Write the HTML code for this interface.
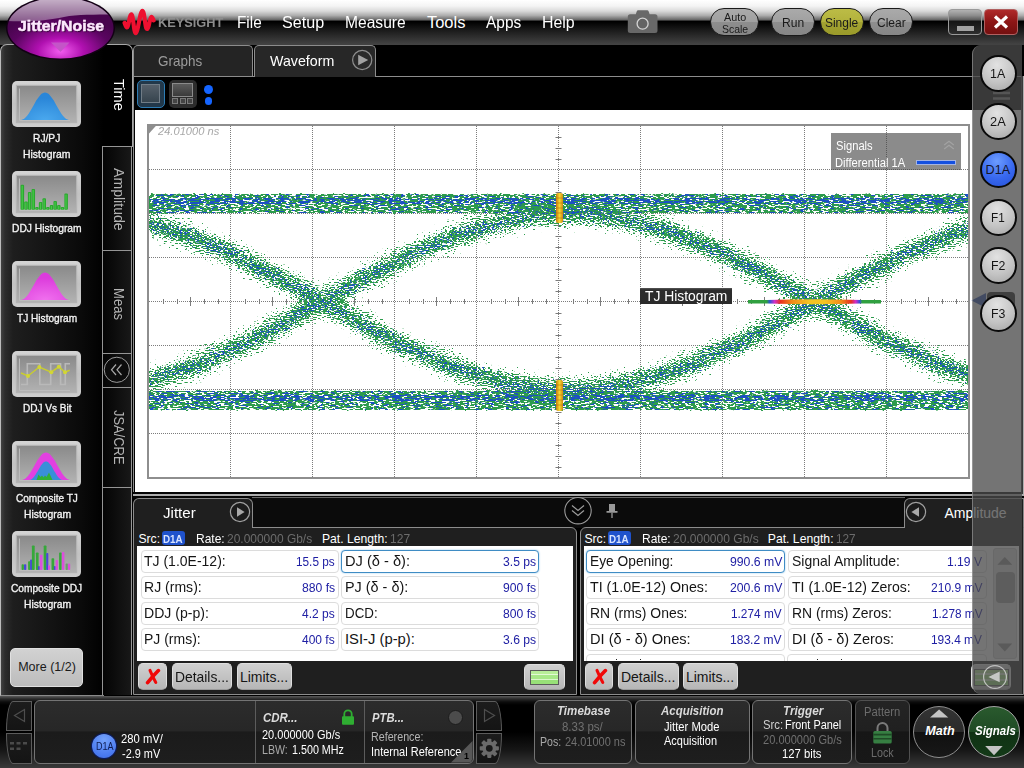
<!DOCTYPE html>
<html lang="en">
<head>
<meta charset="utf-8">
<title>Jitter/Noise</title>
<style>
*{box-sizing:border-box;margin:0;padding:0}
html,body{width:1024px;height:768px;overflow:hidden;background:#000;font-family:"Liberation Sans",sans-serif;color:#fff}
.abs{position:absolute}
.t{position:absolute;white-space:pre;transform-origin:0 0;line-height:normal}
#app{position:relative;width:1024px;height:768px;overflow:hidden;background:#000}
/* top bar */
#topbar{left:0;top:0;width:1024px;height:45px;background:linear-gradient(#fff 0,#f4f4f4 6px,#dadada 11px,#adadad 15.5px,#6c6c6c 19.5px,#000 21.5px,#1a1a1a 30px,#424242 44px)}
.menu{top:12px;font-size:17px;color:#fff;letter-spacing:-0.3px}
.pill{border-radius:14px;border:1.6px solid #1a1a1a;background:linear-gradient(#aaa,#a0a0a0 50%,#8e8e8e 50%,#868686)}
.pill.yel{background:linear-gradient(#bcbc46,#b2b23c 50%,#a3a332 50%,#9a9a2a)}
/* left panel */
#left{left:0;top:44px;width:104px;height:652px;background:linear-gradient(90deg,#424242 0,#2c2c2c 4px,#1e1e1e 12px,#161616 40px,#0a0a0a 80px,#000 100%);border:1px solid #a8a8a8;border-left:1.3px solid #bcbcbc;border-right:none;border-bottom-color:#8a8a8a;border-radius:7px 0 0 0}
.ibtn{left:12px;width:69px;height:46px;border-radius:5px;background:linear-gradient(#d4d4d4,#c2c2c2 50%,#cecece)}
.ibin{left:5px;top:5px;width:59px;height:36px;background:linear-gradient(#8a8a8a,#b2b2b2);box-shadow:0 0 1px 1px #b4b4b4}
.morebtn{border-radius:5px;border:1px solid #e0e0e0;background:linear-gradient(#d2d2d2,#bcbcbc)}
/* vertical tabs */
.vt{position:absolute;writing-mode:vertical-rl;white-space:pre;line-height:1;transform-origin:0 0}
.dot{top:5.5px;width:1.2px;height:1.2px;background:#222}
.sq{top:18px;width:6px;height:6px;border:1px solid #7a7a7a;background:#444}
/* main tabs */
.tab{top:45px;height:30.5px;border:1px solid #8c8c8c;border-bottom:none;border-radius:5px 5px 0 0;background:#242424}
.tab.act{background:#272727;height:32.5px}
/* bottom panels */
.ptab,.pbody{background:#1f1f1f;border:1px solid #8c8c8c}
.ptab{border-bottom:none}
.row{height:23.5px;background:#fff;border:1px solid #dcdcdc;border-radius:4px}
.row.sel{border:1.5px solid #3f8cc4;box-shadow:0 0 2px #8ec4ea}
.btn{height:26.7px;border-radius:5px;border:1px solid #dedede;border-bottom-color:#9a9a9a;background:linear-gradient(#d0d0d0,#b6b6b6)}
.grn{left:5px;top:5px;width:29px;height:15px;border:1px solid #5a5a5a;background:linear-gradient(#b8ee98 0,#b8ee98 22%,#e4fad6 22%,#e4fad6 34%,#a8e888 34%,#a8e888 60%,#dcf8cc 60%,#dcf8cc 72%,#98e078 72%)}
.d1a{width:22.5px;height:14px;border-radius:3px;background:#1f52cc}
/* status bar */
.sb{border:1px solid #747474;border-radius:6px;background:linear-gradient(#2c2c2c 0,#272727 48%,#1b1b1b 50%,#1e1e1e)}
.sbtn{border:1px solid #5c5c5c;background:linear-gradient(#1c1c1c,#141414)}
/* right */
.rb{left:979.5px;width:37px;height:37px;border-radius:50%;border:2px solid #0a0a0a;background:radial-gradient(circle at 45% 25%,#e2e2e2,#c4c4c4 55%,#a4a4a4)}
.rb.blu{background:radial-gradient(circle at 45% 25%,#6c9cff,#3868ee 55%,#2450d8)}
</style>
</head>
<body>
<div id="app">
<div id="topbar" class="abs"></div>
<svg class="abs" style="left:122px;top:8px" width="36" height="28" viewBox="0 0 36 28">
<path d="M2.6 14.9 C3.5 17 4 19.4 4.9 19.4 C6.7 19.4 7.5 6.3 9.4 6.3 C11.3 6.3 11.7 25.2 13.7 25.2 C16 25.2 18 2.8 20.4 2.8 C22.6 2.8 23 21 25 21 C27 21 27.8 8.9 29.3 8.9 C30.3 8.9 30.8 10.5 31.6 12.4" fill="none" stroke="#ee1030" stroke-width="4.2" stroke-linecap="round" stroke-linejoin="round"/></svg>
<span class="t" style="left:158.4px;top:14.8px;font-size:13.5px;color:#8c8c8c;font-weight:bold;transform:scaleX(0.945);">KEYSIGHT</span><span class="t" style="left:236.9px;top:12.6px;font-size:16.5px;color:#fff;transform:scaleX(0.929);">File</span><span class="t" style="left:282.4px;top:12.6px;font-size:16.5px;color:#fff;transform:scaleX(0.979);">Setup</span><span class="t" style="left:344.9px;top:12.6px;font-size:16.5px;color:#fff;transform:scaleX(0.945);">Measure</span><span class="t" style="left:426.9px;top:12.6px;font-size:16.5px;color:#fff;">Tools</span><span class="t" style="left:486.4px;top:12.6px;font-size:16.5px;color:#fff;transform:scaleX(0.936);">Apps</span><span class="t" style="left:542.4px;top:12.6px;font-size:16.5px;color:#fff;transform:scaleX(0.964);">Help</span>
<svg class="abs" style="left:626px;top:9px" width="34" height="26" viewBox="0 0 34 26">
<path d="M4.3 5.2 h5.5 l1 -3 a1.5 1.5 0 0 1 1.4 -1 h9 a1.5 1.5 0 0 1 1.4 1 l1 3 h5.4 a2.5 2.5 0 0 1 2.5 2.5 v13.8 a2.5 2.5 0 0 1 -2.5 2.5 h-24.7 a2.5 2.5 0 0 1 -2.5 -2.5 v-13.8 a2.5 2.5 0 0 1 2.5 -2.5z" fill="#686868"/>
<circle cx="16.6" cy="14.7" r="5.5" fill="#646464" stroke="#d4d4d4" stroke-width="1.3"/></svg>
<div class="abs pill " style="left:709.5px;top:8px;width:49.5px;height:28px"></div><span class="t" style="left:724.4px;top:10.6px;font-size:11.5px;color:#1a1a1a;transform:scaleX(0.938);">Auto</span><span class="t" style="left:722.4px;top:22.6px;font-size:11.5px;color:#1a1a1a;transform:scaleX(0.910);">Scale</span><div class="abs pill " style="left:771px;top:8px;width:44px;height:28px"></div><span class="t" style="left:782.4px;top:15.2px;font-size:13px;color:#1a1a1a;transform:scaleX(0.930);">Run</span><div class="abs pill yel" style="left:820px;top:8px;width:44px;height:28px"></div><span class="t" style="left:825.4px;top:15.2px;font-size:13px;color:#1a1a1a;transform:scaleX(0.919);">Single</span><div class="abs pill " style="left:869px;top:8px;width:44px;height:28px"></div><span class="t" style="left:876.9px;top:15.2px;font-size:13px;color:#1a1a1a;transform:scaleX(0.923);">Clear</span>
<div class="abs" style="left:948px;top:9px;width:34px;height:26px;border:1px solid #9a9a9a;border-radius:4px;background:rgba(70,70,70,.3)"><div class="abs" style="left:8px;top:16px;width:17px;height:4.5px;background:#a2a2a2"></div></div>
<div class="abs" style="left:984px;top:9px;width:34px;height:26px;border:1px solid #b06060;border-radius:4px;background:linear-gradient(#b02a2a,#8c1616 50%,#741010)"></div><svg class="abs" style="left:993px;top:15px" width="16" height="14" viewBox="0 0 16 14"><path d="M2 1.5 L14 12.5 M14 1.5 L2 12.5" stroke="#fff" stroke-width="3.2" fill="none"/></svg>

<div id="left" class="abs"></div>
<div class="abs ibtn" style="top:81px"><div class="abs ibin"></div><svg class="abs" style="left:0;top:0" width="69" height="46" viewBox="0 0 69 46"><path d="M7.5 7.5 V39.5 H58" fill="none" stroke="#bdbdbd" stroke-width="1"/><defs><radialGradient id="gb" cx="50%" cy="100%" r="80%"><stop offset="0" stop-color="#4aa8ee"/><stop offset="1" stop-color="#2a86d8"/></radialGradient></defs><path d="M8.0 39.0 L9.2 38.9 L10.5 38.5 L11.8 37.9 L13.0 36.9 L14.2 35.7 L15.5 34.2 L16.8 32.4 L18.0 30.5 L19.2 28.4 L20.5 26.2 L21.8 23.9 L23.0 21.7 L24.2 19.6 L25.5 17.7 L26.8 15.9 L28.0 14.4 L29.2 13.1 L30.5 12.2 L31.8 11.7 L33.0 11.5 L34.2 11.7 L35.5 12.2 L36.8 13.1 L38.0 14.4 L39.2 15.9 L40.5 17.7 L41.8 19.6 L43.0 21.7 L44.2 23.9 L45.5 26.2 L46.8 28.4 L48.0 30.5 L49.2 32.4 L50.5 34.2 L51.8 35.7 L53.0 36.9 L54.2 37.9 L55.5 38.5 L56.8 38.9 L58.0 39.0 Z" fill="url(#gb)"/></svg></div><span class="t" style="left:33.3px;top:132.3px;font-size:11.5px;color:#f4f4f4;transform:scaleX(0.890);-webkit-text-stroke:.35px #f4f4f4;">RJ/PJ</span><span class="t" style="left:23.3px;top:147.7px;font-size:11.5px;color:#f4f4f4;transform:scaleX(0.904);-webkit-text-stroke:.35px #f4f4f4;">Histogram</span>
<div class="abs ibtn" style="top:171px"><div class="abs ibin"></div><svg class="abs" style="left:0;top:0" width="69" height="46" viewBox="0 0 69 46"><path d="M7.5 7.5 V39.5 H58" fill="none" stroke="#bdbdbd" stroke-width="1"/><rect x="8.60" y="13.75" width="3.5" height="25.0" rx="1" fill="#2aa82e"/><rect x="9.60" y="14.75" width="1.2" height="24.0" fill="#48c84a"/><rect x="12.25" y="30.4" width="3.5" height="8.4" rx="1" fill="#2aa82e"/><rect x="13.25" y="31.4" width="1.2" height="7.4" fill="#48c84a"/><rect x="15.90" y="21" width="3.5" height="17.8" rx="1" fill="#2aa82e"/><rect x="16.90" y="22" width="1.2" height="16.8" fill="#48c84a"/><rect x="19.55" y="17.9" width="3.5" height="20.9" rx="1" fill="#2aa82e"/><rect x="20.55" y="18.9" width="1.2" height="19.9" fill="#48c84a"/><rect x="23.20" y="36.1" width="3.5" height="2.7" rx="1" fill="#2aa82e"/><rect x="24.20" y="37.1" width="1.2" height="1.7" fill="#48c84a"/><rect x="26.85" y="30.9" width="3.5" height="7.9" rx="1" fill="#2aa82e"/><rect x="27.85" y="31.9" width="1.2" height="6.9" fill="#48c84a"/><rect x="30.50" y="27.3" width="3.5" height="11.5" rx="1" fill="#2aa82e"/><rect x="31.50" y="28.3" width="1.2" height="10.5" fill="#48c84a"/><rect x="34.15" y="36.1" width="3.5" height="2.7" rx="1" fill="#2aa82e"/><rect x="35.15" y="37.1" width="1.2" height="1.7" fill="#48c84a"/><rect x="37.80" y="34" width="3.5" height="4.8" rx="1" fill="#2aa82e"/><rect x="38.80" y="35" width="1.2" height="3.8" fill="#48c84a"/><rect x="41.45" y="29.9" width="3.5" height="8.9" rx="1" fill="#2aa82e"/><rect x="42.45" y="30.9" width="1.2" height="7.9" fill="#48c84a"/><rect x="45.10" y="34" width="3.5" height="4.8" rx="1" fill="#2aa82e"/><rect x="46.10" y="35" width="1.2" height="3.8" fill="#48c84a"/><rect x="48.75" y="36.1" width="3.5" height="2.7" rx="1" fill="#2aa82e"/><rect x="49.75" y="37.1" width="1.2" height="1.7" fill="#48c84a"/><rect x="52.40" y="22.6" width="3.5" height="16.2" rx="1" fill="#2aa82e"/><rect x="53.40" y="23.6" width="1.2" height="15.2" fill="#48c84a"/></svg></div><span class="t" style="left:12.3px;top:222.3px;font-size:11.5px;color:#f4f4f4;transform:scaleX(0.893);-webkit-text-stroke:.35px #f4f4f4;">DDJ Histogram</span>
<div class="abs ibtn" style="top:261px"><div class="abs ibin"></div><svg class="abs" style="left:0;top:0" width="69" height="46" viewBox="0 0 69 46"><path d="M7.5 7.5 V39.5 H58" fill="none" stroke="#bdbdbd" stroke-width="1"/><defs><radialGradient id="gm" cx="50%" cy="100%" r="80%"><stop offset="0" stop-color="#f070ee"/><stop offset="1" stop-color="#dc3cdc"/></radialGradient></defs><path d="M8.0 39.0 L9.2 38.9 L10.5 38.5 L11.8 37.9 L13.0 36.9 L14.2 35.7 L15.5 34.2 L16.8 32.4 L18.0 30.5 L19.2 28.4 L20.5 26.2 L21.8 23.9 L23.0 21.7 L24.2 19.6 L25.5 17.7 L26.8 15.9 L28.0 14.4 L29.2 13.1 L30.5 12.2 L31.8 11.7 L33.0 11.5 L34.2 11.7 L35.5 12.2 L36.8 13.1 L38.0 14.4 L39.2 15.9 L40.5 17.7 L41.8 19.6 L43.0 21.7 L44.2 23.9 L45.5 26.2 L46.8 28.4 L48.0 30.5 L49.2 32.4 L50.5 34.2 L51.8 35.7 L53.0 36.9 L54.2 37.9 L55.5 38.5 L56.8 38.9 L58.0 39.0 Z" fill="url(#gm)"/></svg></div><span class="t" style="left:16.9px;top:312.3px;font-size:11.5px;color:#f4f4f4;transform:scaleX(0.879);-webkit-text-stroke:.35px #f4f4f4;">TJ Histogram</span>
<div class="abs ibtn" style="top:351px"><div class="abs ibin"></div><svg class="abs" style="left:0;top:0" width="69" height="46" viewBox="0 0 69 46"><path d="M7.5 7.5 V39.5 H58" fill="none" stroke="#bdbdbd" stroke-width="1"/><path d="M9 33.5 H15.3 V12.7 H27.8 V33.5 H38.7 V12.7 H48.6 V33.5 H53.3 V12.7 H58" fill="none" stroke="#b9b9b9" stroke-width="1.6"/><polyline points="9,22 16,25 27.3,16 39.3,21.2 46.8,15.8 53,21.2 57.7,19.3" fill="none" stroke="#c8cc30" stroke-width="1.5"/><circle cx="16" cy="25" r="2" fill="#d2d634"/><circle cx="27.3" cy="16" r="2" fill="#d2d634"/><circle cx="39.3" cy="21.2" r="2" fill="#d2d634"/><circle cx="46.8" cy="15.8" r="2" fill="#d2d634"/><circle cx="53" cy="21.2" r="2" fill="#d2d634"/></svg></div><span class="t" style="left:23.0px;top:402.3px;font-size:11.5px;color:#f4f4f4;transform:scaleX(0.874);-webkit-text-stroke:.35px #f4f4f4;">DDJ Vs Bit</span>
<div class="abs ibtn" style="top:441px"><div class="abs ibin"></div><svg class="abs" style="left:0;top:0" width="69" height="46" viewBox="0 0 69 46"><path d="M7.5 7.5 V39.5 H58" fill="none" stroke="#bdbdbd" stroke-width="1"/><path d="M9.0 39.0 L10.2 38.9 L11.5 38.5 L12.8 37.9 L14.0 36.9 L15.2 35.7 L16.5 34.2 L17.8 32.4 L19.0 30.5 L20.2 28.4 L21.5 26.2 L22.8 23.9 L24.0 21.7 L25.2 19.6 L26.5 17.7 L27.8 15.9 L29.0 14.4 L30.2 13.1 L31.5 12.2 L32.8 11.7 L34.0 11.5 L35.2 11.7 L36.5 12.2 L37.8 13.1 L39.0 14.4 L40.2 15.9 L41.5 17.7 L42.8 19.6 L44.0 21.7 L45.2 23.9 L46.5 26.2 L47.8 28.4 L49.0 30.5 L50.2 32.4 L51.5 34.2 L52.8 35.7 L54.0 36.9 L55.2 37.9 L56.5 38.5 L57.8 38.9 L59.0 39.0 Z" fill="#e240e0"/><path d="M17.0 39.0 L17.9 38.9 L18.7 38.7 L19.6 38.2 L20.4 37.6 L21.2 36.8 L22.1 35.7 L22.9 34.6 L23.8 33.3 L24.6 31.8 L25.5 30.4 L26.4 28.9 L27.2 27.4 L28.1 26.0 L28.9 24.6 L29.8 23.5 L30.6 22.4 L31.4 21.6 L32.3 21.0 L33.1 20.6 L34.0 20.5 L34.9 20.6 L35.7 21.0 L36.5 21.6 L37.4 22.4 L38.2 23.5 L39.1 24.6 L40.0 26.0 L40.8 27.4 L41.6 28.9 L42.5 30.4 L43.4 31.8 L44.2 33.3 L45.0 34.6 L45.9 35.7 L46.8 36.8 L47.6 37.6 L48.5 38.2 L49.3 38.7 L50.1 38.9 L51.0 39.0 Z" fill="#3a8fd8"/><path d="M24.5 39 L26.5 33.5 L28.5 36 L30 34.5 L31.5 36.5 L33 34.5 L34.5 36 L37 31.5 L40.5 39 Z" fill="#32b034"/></svg></div><span class="t" style="left:16.1px;top:492.3px;font-size:11.5px;color:#f4f4f4;transform:scaleX(0.874);-webkit-text-stroke:.35px #f4f4f4;">Composite TJ</span><span class="t" style="left:23.6px;top:507.7px;font-size:11.5px;color:#f4f4f4;transform:scaleX(0.901);-webkit-text-stroke:.35px #f4f4f4;">Histogram</span>
<div class="abs ibtn" style="top:531px"><div class="abs ibin"></div><svg class="abs" style="left:0;top:0" width="69" height="46" viewBox="0 0 69 46"><path d="M7.5 7.5 V39.5 H58" fill="none" stroke="#bdbdbd" stroke-width="1"/><rect x="9.6" y="33.2" width="2.3" height="5.9" rx=".8" fill="#36a83a"/><rect x="12.0" y="33.2" width="2.3" height="5.9" rx=".8" fill="#4848d8"/><rect x="16.1" y="30.2" width="2.3" height="8.8" rx=".8" fill="#36a83a"/><rect x="18.1" y="28.5" width="2.1" height="10.6" rx=".8" fill="#4848d8"/><rect x="19.9" y="14.4" width="2.8" height="24.6" rx=".8" fill="#36a83a"/><rect x="23.9" y="21.5" width="2.7" height="17.6" rx=".8" fill="#36a83a"/><rect x="26.0" y="34.9" width="1.8" height="4.1" rx=".8" fill="#4848d8"/><rect x="27.8" y="23.8" width="2.7" height="15.2" rx=".8" fill="#dc50dc"/><rect x="31.7" y="14.4" width="2.8" height="24.6" rx=".8" fill="#36a83a"/><rect x="34.2" y="22.0" width="2.1" height="17.0" rx=".8" fill="#4848d8"/><rect x="36.0" y="34.3" width="2.0" height="4.7" rx=".8" fill="#dc50dc"/><rect x="39.5" y="27.3" width="2.7" height="11.7" rx=".8" fill="#36a83a"/><rect x="41.9" y="34.9" width="1.8" height="4.1" rx=".8" fill="#4848d8"/><rect x="43.6" y="29.1" width="2.3" height="10.0" rx=".8" fill="#dc50dc"/><rect x="47.1" y="21.5" width="2.6" height="17.6" rx=".8" fill="#36a83a"/><rect x="49.8" y="21.1" width="2.6" height="17.9" rx=".8" fill="#dc50dc"/><rect x="53.6" y="32.6" width="2.3" height="6.4" rx=".8" fill="#6c9c6c"/><rect x="55.9" y="32.6" width="2.3" height="6.4" rx=".8" fill="#dc50dc"/></svg></div><span class="t" style="left:11.4px;top:582.3px;font-size:11.5px;color:#f4f4f4;transform:scaleX(0.884);-webkit-text-stroke:.35px #f4f4f4;">Composite DDJ</span><span class="t" style="left:23.6px;top:597.7px;font-size:11.5px;color:#f4f4f4;transform:scaleX(0.901);-webkit-text-stroke:.35px #f4f4f4;">Histogram</span>
<div class="abs morebtn" style="left:10px;top:647.8px;width:73px;height:39px"></div><span class="t" style="left:18.2px;top:660.2px;font-size:12.5px;color:#1a1a1a;">More (1/2)</span>

<div class="abs" style="left:103px;top:44px;width:29.5px;height:103px;border:1px solid #a8a8a8;border-left:none;border-bottom:none;border-radius:0 7px 0 0;background:#000"></div><div class="abs" style="left:102px;top:146px;width:1px;height:549px;background:#959595"></div><div class="abs" style="left:131px;top:146px;width:1px;height:549px;background:#959595"></div><div class="abs" style="left:103px;top:146px;width:28px;height:549px;background:linear-gradient(90deg,#040404,#181818)"></div><div class="abs" style="left:103px;top:146px;width:28px;height:1.2px;background:#959595"></div><div class="abs" style="left:103px;top:250px;width:28px;height:1.2px;background:#959595"></div><div class="abs" style="left:103px;top:353px;width:28px;height:1.2px;background:#959595"></div><div class="abs" style="left:103px;top:387px;width:28px;height:1.2px;background:#959595"></div><div class="abs" style="left:103px;top:487px;width:28px;height:1.2px;background:#959595"></div><span class="vt" style="left:112px;top:78.5px;font-size:15px;color:#fff;transform:scaleY(0.969)">Time</span><span class="vt" style="left:112px;top:167.5px;font-size:15px;color:#b4b4b4;transform:scaleY(0.939)">Amplitude</span><span class="vt" style="left:112px;top:287.5px;font-size:15px;color:#b4b4b4;transform:scaleY(0.871)">Meas</span><span class="vt" style="left:112px;top:410.0px;font-size:15px;color:#b4b4b4;transform:scaleY(0.861)">JSA/CRE</span><svg class="abs" style="left:103px;top:355px" width="28" height="30" viewBox="0 0 28 30"><circle cx="13.8" cy="14.8" r="12.6" fill="#0c0c0c" stroke="#9a9a9a" stroke-width="1"/><path d="M13 9.5 L8.5 14.8 L13 20 M18.5 9.5 L14 14.8 L18.5 20" fill="none" stroke="#a8a8a8" stroke-width="1.2"/></svg>
<div class="abs" style="left:132.5px;top:75.5px;width:891px;height:1.5px;background:#8c8c8c"></div><div class="abs tab" style="left:133px;width:120px"></div><span class="t" style="left:158.4px;top:52.9px;font-size:14.5px;color:#9c9c9c;transform:scaleX(0.929);">Graphs</span><div class="abs tab act" style="left:254px;width:121.5px"></div><span class="t" style="left:269.9px;top:52.9px;font-size:14.5px;color:#fff;transform:scaleX(0.980);">Waveform</span><svg class="abs" style="left:351px;top:49px" width="23" height="22" viewBox="0 0 23 22"><circle cx="11.2" cy="11" r="9.6" fill="#2a2a2a" stroke="#8e8e8e" stroke-width="1.2"/><path d="M7.2 5.8 L17.2 11 L7.2 16.2 Z" fill="#a2a2a2"/></svg><div class="abs" style="left:132.5px;top:76px;width:1.5px;height:418px;background:#8c8c8c"></div><div class="abs" style="left:134px;top:77px;width:887.2px;height:33px;background:#000"></div>
<div class="abs" style="left:137px;top:80px;width:28px;height:28px;border:1.5px solid #2c7cb4;border-radius:5px;background:#22384a"><div class="abs" style="left:3px;top:3px;width:19px;height:19px;border:1px solid #707c86;background:linear-gradient(#56606a,#36444e)"></div></div><div class="abs" style="left:169px;top:80px;width:28px;height:28px;border-radius:5px;background:#2c2c2c"><div class="abs" style="left:3px;top:3px;width:21px;height:13.5px;border:1px solid #8a8a8a;background:linear-gradient(#5c5c5c,#3a3a3a)"></div><div class="abs sq" style="left:3px"></div><div class="abs sq" style="left:10.5px"></div><div class="abs sq" style="left:18px"></div></div><div class="abs" style="left:204px;top:84.5px;width:9px;height:9px;border-radius:50%;background:#1565ff"></div><div class="abs" style="left:204.8px;top:97.3px;width:7.4px;height:7.4px;border-radius:50%;background:#1565ff"></div>
<div class="abs" style="left:134.6px;top:109.8px;width:886.6px;height:382.2px;background:#fff"></div><svg class="abs" style="left:147px;top:124px" width="823" height="355" viewBox="147 124 823 355"><defs><filter id="spg" filterUnits="userSpaceOnUse" x="147" y="124" width="823" height="355" color-interpolation-filters="sRGB"><feTurbulence type="fractalNoise" baseFrequency="0.42 0.97" numOctaves="1" seed="7" result="n"/><feColorMatrix in="n" type="matrix" values="0 0 0 0 0 0 0 0 0 0 0 0 0 0 0 2.3 0 0 0 -0.620" result="na"/><feGaussianBlur in="SourceAlpha" stdDeviation="4.2" result="d"/><feComposite in="d" in2="na" operator="arithmetic" k1="0" k2="12" k3="-12" k4="0.5" result="m"/><feComponentTransfer in="d" result="dm"><feFuncA type="linear" slope="40" intercept="-0.5"/></feComponentTransfer><feComposite in="m" in2="dm" operator="in" result="mm"/><feFlood flood-color="#2c9b4c"/><feComposite operator="in" in2="mm"/></filter><filter id="spb" filterUnits="userSpaceOnUse" x="147" y="124" width="823" height="355" color-interpolation-filters="sRGB"><feTurbulence type="fractalNoise" baseFrequency="0.4 0.95" numOctaves="1" seed="23" result="n"/><feColorMatrix in="n" type="matrix" values="0 0 0 0 0 0 0 0 0 0 0 0 0 0 0 0 2.3 0 0 -0.620" result="na"/><feGaussianBlur in="SourceAlpha" stdDeviation="3.0" result="d"/><feComposite in="d" in2="na" operator="arithmetic" k1="0" k2="12" k3="-12" k4="0.5" result="m"/><feComponentTransfer in="d" result="dm"><feFuncA type="linear" slope="40" intercept="-0.5"/></feComponentTransfer><feComposite in="m" in2="dm" operator="in" result="mm"/><feFlood flood-color="#1c54bc"/><feComposite operator="in" in2="mm"/></filter><filter id="rlg" filterUnits="userSpaceOnUse" x="147" y="124" width="823" height="355" color-interpolation-filters="sRGB"><feTurbulence type="fractalNoise" baseFrequency="0.28 1.37" numOctaves="1" seed="11" result="n"/><feColorMatrix in="n" type="matrix" values="0 0 0 0 0 0 0 0 0 0 0 0 0 0 0 2.3 0 0 0 -0.620" result="na"/><feGaussianBlur in="SourceAlpha" stdDeviation="0.6" result="d"/><feComposite in="d" in2="na" operator="arithmetic" k1="0" k2="12" k3="-12" k4="0.5" result="m"/><feComponentTransfer in="d" result="dm"><feFuncA type="linear" slope="40" intercept="-0.5"/></feComponentTransfer><feComposite in="m" in2="dm" operator="in" result="mm"/><feFlood flood-color="#2c9b4c"/><feComposite operator="in" in2="mm"/></filter><filter id="rlb" filterUnits="userSpaceOnUse" x="147" y="124" width="823" height="355" color-interpolation-filters="sRGB"><feTurbulence type="fractalNoise" baseFrequency="0.2 1.43" numOctaves="1" seed="31" result="n"/><feColorMatrix in="n" type="matrix" values="0 0 0 0 0 0 0 0 0 0 0 0 0 0 0 0 2.3 0 0 -0.620" result="na"/><feGaussianBlur in="SourceAlpha" stdDeviation="0.6" result="d"/><feComposite in="d" in2="na" operator="arithmetic" k1="0" k2="12" k3="-12" k4="0.5" result="m"/><feComponentTransfer in="d" result="dm"><feFuncA type="linear" slope="40" intercept="-0.5"/></feComponentTransfer><feComposite in="m" in2="dm" operator="in" result="mm"/><feFlood flood-color="#1c50c4"/><feComposite operator="in" in2="mm"/></filter><clipPath id="pc"><rect x="149" y="126" width="819" height="351"/></clipPath></defs><g stroke="#7c7c7c" stroke-width="1" stroke-dasharray="1 1" fill="none"><path d="M230.5 126 V477"/><path d="M312.5 126 V477"/><path d="M394.5 126 V477"/><path d="M476.5 126 V477"/><path d="M558.5 126 V477"/><path d="M640.5 126 V477"/><path d="M722.5 126 V477"/><path d="M804.5 126 V477"/><path d="M886.5 126 V477"/><path d="M149 169.5 H968"/><path d="M149 213.5 H968"/><path d="M149 257.5 H968"/><path d="M149 301.5 H968"/><path d="M149 345.5 H968"/><path d="M149 389.5 H968"/><path d="M149 433.5 H968"/></g><path d="M163.5 299.0 V304.0M177.5 299.0 V304.0M190.5 297.0 V306.0M204.5 299.0 V304.0M218.5 299.0 V304.0M245.5 299.0 V304.0M259.5 299.0 V304.0M272.5 297.0 V306.0M286.5 299.0 V304.0M300.5 299.0 V304.0M327.5 299.0 V304.0M341.5 299.0 V304.0M354.5 297.0 V306.0M368.5 299.0 V304.0M382.5 299.0 V304.0M409.5 299.0 V304.0M423.5 299.0 V304.0M436.5 297.0 V306.0M450.5 299.0 V304.0M464.5 299.0 V304.0M491.5 299.0 V304.0M505.5 299.0 V304.0M518.5 297.0 V306.0M532.5 299.0 V304.0M546.5 299.0 V304.0M573.5 299.0 V304.0M587.5 299.0 V304.0M600.5 297.0 V306.0M614.5 299.0 V304.0M628.5 299.0 V304.0M655.5 299.0 V304.0M669.5 299.0 V304.0M682.5 297.0 V306.0M696.5 299.0 V304.0M710.5 299.0 V304.0M737.5 299.0 V304.0M751.5 299.0 V304.0M764.5 297.0 V306.0M778.5 299.0 V304.0M792.5 299.0 V304.0M819.5 299.0 V304.0M833.5 299.0 V304.0M846.5 297.0 V306.0M860.5 299.0 V304.0M874.5 299.0 V304.0M901.5 299.0 V304.0M915.5 299.0 V304.0M928.5 297.0 V306.0M942.5 299.0 V304.0M956.5 299.0 V304.0M555.5 137.5 H561.5M555.5 148.5 H561.5M555.5 159.5 H561.5M555.5 181.5 H561.5M555.5 192.5 H561.5M555.5 203.5 H561.5M555.5 225.5 H561.5M555.5 236.5 H561.5M555.5 247.5 H561.5M555.5 269.5 H561.5M555.5 280.5 H561.5M555.5 291.5 H561.5M555.5 313.5 H561.5M555.5 324.5 H561.5M555.5 335.5 H561.5M555.5 357.5 H561.5M555.5 368.5 H561.5M555.5 379.5 H561.5M555.5 401.5 H561.5M555.5 412.5 H561.5M555.5 423.5 H561.5M555.5 445.5 H561.5M555.5 456.5 H561.5M555.5 467.5 H561.5" stroke="#7c7c7c" stroke-width="1" fill="none"/><g clip-path="url(#pc)"><g filter="url(#rlg)" fill="none" stroke="#000"><path d="M100 203.5 H1020 M100 400.5 H1020" stroke-width="19.5" stroke-opacity=".64"/></g><g filter="url(#spg)" fill="none" stroke="#000"><path d="M-417.5 389.5 L-407.2 389.3 L-397.0 388.8 L-386.7 387.8 L-376.4 386.5 L-366.1 384.9 L-355.9 382.8 L-345.6 380.5 L-335.3 377.8 L-325.1 374.8 L-314.8 371.4 L-304.5 367.8 L-294.2 363.9 L-284.0 359.7 L-273.7 355.3 L-263.4 350.6 L-253.2 345.8 L-242.9 340.7 L-232.6 335.5 L-222.4 330.1 L-212.1 324.6 L-201.8 319.1 L-191.5 313.4 L-181.3 307.7 L-171.0 302.0 L-160.7 296.3 L-150.5 290.6 L-140.2 284.9 L-129.9 279.4 L-119.6 273.9 L-109.4 268.5 L-99.1 263.3 L-88.8 258.2 L-78.6 253.4 L-68.3 248.7 L-58.0 244.3 L-47.8 240.1 L-37.5 236.2 L-27.2 232.6 L-16.9 229.2 L-6.7 226.2 L3.6 223.5 L13.9 221.2 L24.1 219.1 L34.4 217.5 L44.7 216.2 L55.0 215.2 L65.2 214.7 L75.5 214.5M-417.5 214.5 L-407.2 214.7 L-397.0 215.2 L-386.7 216.2 L-376.4 217.5 L-366.1 219.1 L-355.9 221.2 L-345.6 223.5 L-335.3 226.2 L-325.1 229.2 L-314.8 232.6 L-304.5 236.2 L-294.2 240.1 L-284.0 244.3 L-273.7 248.7 L-263.4 253.4 L-253.2 258.2 L-242.9 263.3 L-232.6 268.5 L-222.4 273.9 L-212.1 279.4 L-201.8 284.9 L-191.5 290.6 L-181.3 296.3 L-171.0 302.0 L-160.7 307.7 L-150.5 313.4 L-140.2 319.1 L-129.9 324.6 L-119.6 330.1 L-109.4 335.5 L-99.1 340.7 L-88.8 345.8 L-78.6 350.6 L-68.3 355.3 L-58.0 359.7 L-47.8 363.9 L-37.5 367.8 L-27.2 371.4 L-16.9 374.8 L-6.7 377.8 L3.6 380.5 L13.9 382.8 L24.1 384.9 L34.4 386.5 L44.7 387.8 L55.0 388.8 L65.2 389.3 L75.5 389.5M75.5 389.5 L85.8 389.3 L96.0 388.8 L106.3 387.8 L116.6 386.5 L126.9 384.9 L137.1 382.8 L147.4 380.5 L157.7 377.8 L167.9 374.8 L178.2 371.4 L188.5 367.8 L198.8 363.9 L209.0 359.7 L219.3 355.3 L229.6 350.6 L239.8 345.8 L250.1 340.7 L260.4 335.5 L270.6 330.1 L280.9 324.6 L291.2 319.1 L301.5 313.4 L311.7 307.7 L322.0 302.0 L332.3 296.3 L342.5 290.6 L352.8 284.9 L363.1 279.4 L373.4 273.9 L383.6 268.5 L393.9 263.3 L404.2 258.2 L414.4 253.4 L424.7 248.7 L435.0 244.3 L445.2 240.1 L455.5 236.2 L465.8 232.6 L476.1 229.2 L486.3 226.2 L496.6 223.5 L506.9 221.2 L517.1 219.1 L527.4 217.5 L537.7 216.2 L548.0 215.2 L558.2 214.7 L568.5 214.5M75.5 214.5 L85.8 214.7 L96.0 215.2 L106.3 216.2 L116.6 217.5 L126.9 219.1 L137.1 221.2 L147.4 223.5 L157.7 226.2 L167.9 229.2 L178.2 232.6 L188.5 236.2 L198.8 240.1 L209.0 244.3 L219.3 248.7 L229.6 253.4 L239.8 258.2 L250.1 263.3 L260.4 268.5 L270.6 273.9 L280.9 279.4 L291.2 284.9 L301.5 290.6 L311.7 296.3 L322.0 302.0 L332.3 307.7 L342.5 313.4 L352.8 319.1 L363.1 324.6 L373.4 330.1 L383.6 335.5 L393.9 340.7 L404.2 345.8 L414.4 350.6 L424.7 355.3 L435.0 359.7 L445.2 363.9 L455.5 367.8 L465.8 371.4 L476.1 374.8 L486.3 377.8 L496.6 380.5 L506.9 382.8 L517.1 384.9 L527.4 386.5 L537.7 387.8 L548.0 388.8 L558.2 389.3 L568.5 389.5M568.5 389.5 L578.8 389.3 L589.0 388.8 L599.3 387.8 L609.6 386.5 L619.9 384.9 L630.1 382.8 L640.4 380.5 L650.7 377.8 L660.9 374.8 L671.2 371.4 L681.5 367.8 L691.8 363.9 L702.0 359.7 L712.3 355.3 L722.6 350.6 L732.8 345.8 L743.1 340.7 L753.4 335.5 L763.6 330.1 L773.9 324.6 L784.2 319.1 L794.5 313.4 L804.7 307.7 L815.0 302.0 L825.3 296.3 L835.5 290.6 L845.8 284.9 L856.1 279.4 L866.4 273.9 L876.6 268.5 L886.9 263.3 L897.2 258.2 L907.4 253.4 L917.7 248.7 L928.0 244.3 L938.2 240.1 L948.5 236.2 L958.8 232.6 L969.1 229.2 L979.3 226.2 L989.6 223.5 L999.9 221.2 L1010.1 219.1 L1020.4 217.5 L1030.7 216.2 L1041.0 215.2 L1051.2 214.7 L1061.5 214.5M568.5 214.5 L578.8 214.7 L589.0 215.2 L599.3 216.2 L609.6 217.5 L619.9 219.1 L630.1 221.2 L640.4 223.5 L650.7 226.2 L660.9 229.2 L671.2 232.6 L681.5 236.2 L691.8 240.1 L702.0 244.3 L712.3 248.7 L722.6 253.4 L732.8 258.2 L743.1 263.3 L753.4 268.5 L763.6 273.9 L773.9 279.4 L784.2 284.9 L794.5 290.6 L804.7 296.3 L815.0 302.0 L825.3 307.7 L835.5 313.4 L845.8 319.1 L856.1 324.6 L866.4 330.1 L876.6 335.5 L886.9 340.7 L897.2 345.8 L907.4 350.6 L917.7 355.3 L928.0 359.7 L938.2 363.9 L948.5 367.8 L958.8 371.4 L969.1 374.8 L979.3 377.8 L989.6 380.5 L999.9 382.8 L1010.1 384.9 L1020.4 386.5 L1030.7 387.8 L1041.0 388.8 L1051.2 389.3 L1061.5 389.5" stroke-width="21" stroke-opacity=".66"/></g><g filter="url(#rlb)" fill="none" stroke="#000"><path d="M100 203.5 H1020 M100 400.5 H1020" stroke-width="19" stroke-opacity=".27"/><path d="M100 201.0 H1020 M100 398.0 H1020" stroke-width="6" stroke-opacity=".36"/></g><g filter="url(#spb)" fill="none" stroke="#000"><path d="M-417.5 389.5 L-407.2 389.3 L-397.0 388.8 L-386.7 387.8 L-376.4 386.5 L-366.1 384.9 L-355.9 382.8 L-345.6 380.5 L-335.3 377.8 L-325.1 374.8 L-314.8 371.4 L-304.5 367.8 L-294.2 363.9 L-284.0 359.7 L-273.7 355.3 L-263.4 350.6 L-253.2 345.8 L-242.9 340.7 L-232.6 335.5 L-222.4 330.1 L-212.1 324.6 L-201.8 319.1 L-191.5 313.4 L-181.3 307.7 L-171.0 302.0 L-160.7 296.3 L-150.5 290.6 L-140.2 284.9 L-129.9 279.4 L-119.6 273.9 L-109.4 268.5 L-99.1 263.3 L-88.8 258.2 L-78.6 253.4 L-68.3 248.7 L-58.0 244.3 L-47.8 240.1 L-37.5 236.2 L-27.2 232.6 L-16.9 229.2 L-6.7 226.2 L3.6 223.5 L13.9 221.2 L24.1 219.1 L34.4 217.5 L44.7 216.2 L55.0 215.2 L65.2 214.7 L75.5 214.5M-417.5 214.5 L-407.2 214.7 L-397.0 215.2 L-386.7 216.2 L-376.4 217.5 L-366.1 219.1 L-355.9 221.2 L-345.6 223.5 L-335.3 226.2 L-325.1 229.2 L-314.8 232.6 L-304.5 236.2 L-294.2 240.1 L-284.0 244.3 L-273.7 248.7 L-263.4 253.4 L-253.2 258.2 L-242.9 263.3 L-232.6 268.5 L-222.4 273.9 L-212.1 279.4 L-201.8 284.9 L-191.5 290.6 L-181.3 296.3 L-171.0 302.0 L-160.7 307.7 L-150.5 313.4 L-140.2 319.1 L-129.9 324.6 L-119.6 330.1 L-109.4 335.5 L-99.1 340.7 L-88.8 345.8 L-78.6 350.6 L-68.3 355.3 L-58.0 359.7 L-47.8 363.9 L-37.5 367.8 L-27.2 371.4 L-16.9 374.8 L-6.7 377.8 L3.6 380.5 L13.9 382.8 L24.1 384.9 L34.4 386.5 L44.7 387.8 L55.0 388.8 L65.2 389.3 L75.5 389.5M75.5 389.5 L85.8 389.3 L96.0 388.8 L106.3 387.8 L116.6 386.5 L126.9 384.9 L137.1 382.8 L147.4 380.5 L157.7 377.8 L167.9 374.8 L178.2 371.4 L188.5 367.8 L198.8 363.9 L209.0 359.7 L219.3 355.3 L229.6 350.6 L239.8 345.8 L250.1 340.7 L260.4 335.5 L270.6 330.1 L280.9 324.6 L291.2 319.1 L301.5 313.4 L311.7 307.7 L322.0 302.0 L332.3 296.3 L342.5 290.6 L352.8 284.9 L363.1 279.4 L373.4 273.9 L383.6 268.5 L393.9 263.3 L404.2 258.2 L414.4 253.4 L424.7 248.7 L435.0 244.3 L445.2 240.1 L455.5 236.2 L465.8 232.6 L476.1 229.2 L486.3 226.2 L496.6 223.5 L506.9 221.2 L517.1 219.1 L527.4 217.5 L537.7 216.2 L548.0 215.2 L558.2 214.7 L568.5 214.5M75.5 214.5 L85.8 214.7 L96.0 215.2 L106.3 216.2 L116.6 217.5 L126.9 219.1 L137.1 221.2 L147.4 223.5 L157.7 226.2 L167.9 229.2 L178.2 232.6 L188.5 236.2 L198.8 240.1 L209.0 244.3 L219.3 248.7 L229.6 253.4 L239.8 258.2 L250.1 263.3 L260.4 268.5 L270.6 273.9 L280.9 279.4 L291.2 284.9 L301.5 290.6 L311.7 296.3 L322.0 302.0 L332.3 307.7 L342.5 313.4 L352.8 319.1 L363.1 324.6 L373.4 330.1 L383.6 335.5 L393.9 340.7 L404.2 345.8 L414.4 350.6 L424.7 355.3 L435.0 359.7 L445.2 363.9 L455.5 367.8 L465.8 371.4 L476.1 374.8 L486.3 377.8 L496.6 380.5 L506.9 382.8 L517.1 384.9 L527.4 386.5 L537.7 387.8 L548.0 388.8 L558.2 389.3 L568.5 389.5M568.5 389.5 L578.8 389.3 L589.0 388.8 L599.3 387.8 L609.6 386.5 L619.9 384.9 L630.1 382.8 L640.4 380.5 L650.7 377.8 L660.9 374.8 L671.2 371.4 L681.5 367.8 L691.8 363.9 L702.0 359.7 L712.3 355.3 L722.6 350.6 L732.8 345.8 L743.1 340.7 L753.4 335.5 L763.6 330.1 L773.9 324.6 L784.2 319.1 L794.5 313.4 L804.7 307.7 L815.0 302.0 L825.3 296.3 L835.5 290.6 L845.8 284.9 L856.1 279.4 L866.4 273.9 L876.6 268.5 L886.9 263.3 L897.2 258.2 L907.4 253.4 L917.7 248.7 L928.0 244.3 L938.2 240.1 L948.5 236.2 L958.8 232.6 L969.1 229.2 L979.3 226.2 L989.6 223.5 L999.9 221.2 L1010.1 219.1 L1020.4 217.5 L1030.7 216.2 L1041.0 215.2 L1051.2 214.7 L1061.5 214.5M568.5 214.5 L578.8 214.7 L589.0 215.2 L599.3 216.2 L609.6 217.5 L619.9 219.1 L630.1 221.2 L640.4 223.5 L650.7 226.2 L660.9 229.2 L671.2 232.6 L681.5 236.2 L691.8 240.1 L702.0 244.3 L712.3 248.7 L722.6 253.4 L732.8 258.2 L743.1 263.3 L753.4 268.5 L763.6 273.9 L773.9 279.4 L784.2 284.9 L794.5 290.6 L804.7 296.3 L815.0 302.0 L825.3 307.7 L835.5 313.4 L845.8 319.1 L856.1 324.6 L866.4 330.1 L876.6 335.5 L886.9 340.7 L897.2 345.8 L907.4 350.6 L917.7 355.3 L928.0 359.7 L938.2 363.9 L948.5 367.8 L958.8 371.4 L969.1 374.8 L979.3 377.8 L989.6 380.5 L999.9 382.8 L1010.1 384.9 L1020.4 386.5 L1030.7 387.8 L1041.0 388.8 L1051.2 389.3 L1061.5 389.5" stroke-width="11" stroke-opacity=".41"/></g></g><defs><linearGradient id="hy" x1="0" x2="1"><stop offset="0" stop-color="#c87a10"/><stop offset=".5" stop-color="#f6d830"/><stop offset="1" stop-color="#d08a14"/></linearGradient>
<linearGradient id="tj" x1="0" x2="1"><stop offset="0" stop-color="#30a040"/><stop offset=".14" stop-color="#30a040"/><stop offset=".165" stop-color="#3050d8"/><stop offset=".2" stop-color="#d030c8"/><stop offset=".245" stop-color="#e83020"/><stop offset=".33" stop-color="#f08a18"/><stop offset=".46" stop-color="#f4c424"/><stop offset=".58" stop-color="#f4c424"/><stop offset=".7" stop-color="#f08a18"/><stop offset=".775" stop-color="#e83020"/><stop offset=".81" stop-color="#d030c8"/><stop offset=".84" stop-color="#3050d8"/><stop offset=".858" stop-color="#30a040"/><stop offset="1" stop-color="#30a040"/></linearGradient></defs><rect x="556" y="193" width="7" height="30" rx="2" fill="url(#hy)"/><rect x="556" y="380" width="7" height="31" rx="2" fill="url(#hy)"/><path d="M556 198h7M556 203h7M556 208h7M556 213h7M556 218h7M556 385h7M556 390h7M556 395h7M556 400h7M556 405h7" stroke="#b86a10" stroke-width=".8" opacity=".7"/><path d="M748 300 H767 Q814 298.7 861 300 H881 V303.6 H861 Q814 305 767 303.6 H748 Z" fill="url(#tj)"/><rect x="148" y="125" width="821" height="353" fill="none" stroke="#8e8e8e" stroke-width="2"/><path d="M147 124 H157.6 L147 135.8 Z" fill="#8e8e8e"/></svg><span class="t" style="left:157.9px;top:125.2px;font-size:10.5px;color:#a8a8a8;font-style:italic;transform:scaleX(1.059);">24.01000 ns</span><div class="abs" style="left:831px;top:133px;width:130px;height:36.5px;background:rgba(68,68,68,.62)"></div><span class="t" style="left:835.9px;top:138.6px;font-size:12px;color:#fff;transform:scaleX(0.932);">Signals</span><span class="t" style="left:834.9px;top:155.6px;font-size:12px;color:#fff;transform:scaleX(0.934);">Differential 1A</span><div class="abs" style="left:916px;top:160px;width:40px;height:4.5px;background:#1450e0;border:.6px solid #a4b4e4"></div><svg class="abs" style="left:943px;top:140px" width="12" height="10" viewBox="0 0 12 10"><path d="M1.2 5 L6 1.2 L10.8 5 M1.2 9 L6 5.2 L10.8 9" fill="none" stroke="#a2a2a2" stroke-width="1.2"/></svg><div class="abs" style="left:640px;top:287.5px;width:92px;height:16px;background:linear-gradient(#585858 0,#2c2c2c 2px,#2a2a2a)"></div><span class="t" style="left:645.4px;top:288.4px;font-size:14px;color:#fff;transform:scaleX(0.990);">TJ Histogram</span>

<div class="abs" style="left:132.5px;top:492px;width:891px;height:5.5px;background:#050505"></div><div class="abs" style="left:132.5px;top:494.2px;width:891px;height:1.4px;background:#adadad"></div><div class="abs" style="left:252px;top:497px;width:653px;height:30.5px;background:#0b0b0b;border-top:1px solid #6a6a6a"></div><div class="abs ptab" style="left:132.5px;top:497.5px;width:120px;height:31px;border-radius:6px 6px 0 0"></div><div class="abs pbody" style="left:132.5px;top:527px;width:444.5px;height:167.5px;border-radius:0 6px 0 0"></div><div class="abs" style="left:133.5px;top:526px;width:118px;height:3px;background:#1f1f1f"></div><span class="t" style="left:163.4px;top:504.9px;font-size:14px;color:#fff;transform:scaleX(1.078);">Jitter</span><svg class="abs" style="left:229px;top:501px" width="22" height="22" viewBox="0 0 22 22"><circle cx="11" cy="11" r="9.6" fill="#1c1c1c" stroke="#a0a0a0" stroke-width="1.2"/><path d="M8 6.2 L15.6 11 L8 15.8 Z" fill="#a8a8a8"/></svg><span class="t" style="left:138.4px;top:532.0px;font-size:12.2px;color:#fff;">Src:</span><div class="abs d1a" style="left:162px;top:531px"></div><span class="t" style="left:163.4px;top:532.7px;font-size:10.5px;color:#d8e4ff;font-weight:bold;transform:scaleX(0.937);">D1A</span><span class="t" style="left:196.4px;top:532.0px;font-size:12.2px;color:#fff;transform:scaleX(0.985);">Rate:</span><span class="t" style="left:227.4px;top:532.0px;font-size:12.2px;color:#6c6c6c;transform:scaleX(0.982);">20.000000 Gb/s</span><span class="t" style="left:321.9px;top:532.0px;font-size:12.2px;color:#fff;">Pat. Length:</span><span class="t" style="left:389.9px;top:532.0px;font-size:12.2px;color:#6c6c6c;transform:scaleX(0.988);">127</span><div class="abs" style="left:137px;top:546px;width:435.5px;height:115px;background:#fff"></div>
<div class="abs row" style="left:140.5px;top:549.5px;width:198px"></div><span class="t" style="left:144.4px;top:552.9px;font-size:14.8px;color:#151515;transform:scaleX(0.946);">TJ (1.0E-12):</span><span class="t" style="left:296.4px;top:554.0px;font-size:13.6px;color:#2020a4;transform:scaleX(0.868);">15.5 ps</span><div class="abs row" style="left:140.5px;top:575.5px;width:198px"></div><span class="t" style="left:144.4px;top:578.9px;font-size:14.8px;color:#151515;transform:scaleX(0.949);">RJ (rms):</span><span class="t" style="left:301.9px;top:580.0px;font-size:13.6px;color:#2020a4;transform:scaleX(0.897);">880 fs</span><div class="abs row" style="left:140.5px;top:601.5px;width:198px"></div><span class="t" style="left:144.4px;top:604.9px;font-size:14.8px;color:#151515;transform:scaleX(0.951);">DDJ (p-p):</span><span class="t" style="left:302.4px;top:606.0px;font-size:13.6px;color:#2020a4;transform:scaleX(0.883);">4.2 ps</span><div class="abs row" style="left:140.5px;top:627.5px;width:198px"></div><span class="t" style="left:144.4px;top:630.9px;font-size:14.8px;color:#151515;transform:scaleX(0.945);">PJ (rms):</span><span class="t" style="left:302.4px;top:632.0px;font-size:13.6px;color:#2020a4;transform:scaleX(0.883);">400 fs</span>
<div class="abs row sel" style="left:341.1px;top:549.5px;width:198px"></div><span class="t" style="left:345.0px;top:552.9px;font-size:14.8px;color:#151515;transform:scaleX(0.988);">DJ (δ - δ):</span><span class="t" style="left:503.2px;top:554.0px;font-size:13.6px;color:#2020a4;transform:scaleX(0.894);">3.5 ps</span><div class="abs row" style="left:341.1px;top:575.5px;width:198px"></div><span class="t" style="left:345.0px;top:578.9px;font-size:14.8px;color:#151515;transform:scaleX(0.973);">PJ (δ - δ):</span><span class="t" style="left:503.2px;top:580.0px;font-size:13.6px;color:#2020a4;transform:scaleX(0.894);">900 fs</span><div class="abs row" style="left:341.1px;top:601.5px;width:198px"></div><span class="t" style="left:345.0px;top:604.9px;font-size:14.8px;color:#151515;transform:scaleX(0.901);">DCD:</span><span class="t" style="left:503.2px;top:606.0px;font-size:13.6px;color:#2020a4;transform:scaleX(0.894);">800 fs</span><div class="abs row" style="left:341.1px;top:627.5px;width:198px"></div><span class="t" style="left:345.0px;top:630.9px;font-size:14.8px;color:#151515;">ISI-J (p-p):</span><span class="t" style="left:503.2px;top:632.0px;font-size:13.6px;color:#2020a4;transform:scaleX(0.894);">3.6 ps</span>
<div class="abs btn" style="left:138px;top:663.3px;width:29px"></div><svg class="abs" style="left:145px;top:668px" width="16" height="17" viewBox="0 0 16 17"><path d="M5 2.4 C6.5 6 8.5 10.5 10.8 14.4" fill="none" stroke="#f00808" stroke-width="3" stroke-linecap="round"/><path d="M13.4 2.6 C10 6 6 10.5 2.6 14.6" fill="none" stroke="#f00808" stroke-width="3.6" stroke-linecap="round"/></svg><div class="abs btn" style="left:172px;top:663.3px;width:60px"></div><span class="t" style="left:174.9px;top:669.3px;font-size:14px;color:#151515;transform:scaleX(0.990);">Details...</span><div class="abs btn" style="left:237px;top:663.3px;width:55px"></div><span class="t" style="left:239.9px;top:669.3px;font-size:14px;color:#151515;">Limits...</span><div class="abs btn" style="left:524px;top:663.5px;width:41px"><div class="abs grn"></div></div>
<svg class="abs" style="left:563px;top:496px" width="30" height="30" viewBox="0 0 30 30"><circle cx="15" cy="14.7" r="13.2" fill="#070707" stroke="#9c9c9c" stroke-width="1.1"/><path d="M9 9.5 L15 14.5 L21 9.5 M9 14.5 L15 19.5 L21 14.5" fill="none" stroke="#9c9c9c" stroke-width="1.2"/></svg><svg class="abs" style="left:605px;top:503px" width="14" height="16" viewBox="0 0 14 16"><path d="M4 1 H10 V8 H12.5 V9.8 H1.5 V8 H4 Z" fill="#9a9a9a"/><path d="M7 9.8 V15" stroke="#9a9a9a" stroke-width="1.3"/></svg>
<div class="abs ptab" style="left:904px;top:497.5px;width:119.5px;height:31px;border-radius:6px 0 0 0"></div><div class="abs pbody" style="left:579.5px;top:527px;width:444px;height:167.5px;border-radius:6px 0 0 0"></div><div class="abs" style="left:905px;top:526px;width:117.5px;height:3px;background:#1f1f1f"></div><svg class="abs" style="left:904.5px;top:500.5px" width="22" height="22" viewBox="0 0 22 22"><circle cx="11" cy="11" r="9.6" fill="#1c1c1c" stroke="#a0a0a0" stroke-width="1.2"/><path d="M14 6.2 L6.4 11 L14 15.8 Z" fill="#a8a8a8"/></svg><span class="t" style="left:944.4px;top:505.1px;font-size:14px;color:#fff;">Amplitude</span><span class="t" style="left:584.4px;top:532.0px;font-size:12.2px;color:#fff;">Src:</span><div class="abs d1a" style="left:608px;top:531px"></div><span class="t" style="left:609.4px;top:532.7px;font-size:10.5px;color:#d8e4ff;font-weight:bold;transform:scaleX(0.937);">D1A</span><span class="t" style="left:641.9px;top:532.0px;font-size:12.2px;color:#fff;transform:scaleX(0.985);">Rate:</span><span class="t" style="left:673.4px;top:532.0px;font-size:12.2px;color:#6c6c6c;transform:scaleX(0.988);">20.000000 Gb/s</span><span class="t" style="left:767.8px;top:532.0px;font-size:12.2px;color:#fff;">Pat. Length:</span><span class="t" style="left:835.9px;top:532.0px;font-size:12.2px;color:#6c6c6c;transform:scaleX(0.968);">127</span><div class="abs" style="left:583.5px;top:546px;width:435px;height:115px;background:#fff"></div>
<div class="abs row sel" style="left:585.8px;top:549.5px;width:199.5px"></div><span class="t" style="left:589.7px;top:552.9px;font-size:14.8px;color:#151515;transform:scaleX(0.930);">Eye Opening:</span><span class="t" style="left:729.6px;top:554.0px;font-size:13.6px;color:#2020a4;transform:scaleX(0.901);">990.6 mV</span><div class="abs row" style="left:585.8px;top:575.5px;width:199.5px"></div><span class="t" style="left:589.7px;top:578.9px;font-size:14.8px;color:#151515;transform:scaleX(0.962);">TI (1.0E-12) Ones:</span><span class="t" style="left:729.6px;top:580.0px;font-size:13.6px;color:#2020a4;transform:scaleX(0.901);">200.6 mV</span><div class="abs row" style="left:585.8px;top:601.5px;width:199.5px"></div><span class="t" style="left:589.7px;top:604.9px;font-size:14.8px;color:#151515;transform:scaleX(0.941);">RN (rms) Ones:</span><span class="t" style="left:731.4px;top:606.0px;font-size:13.6px;color:#2020a4;transform:scaleX(0.870);">1.274 mV</span><div class="abs row" style="left:585.8px;top:627.5px;width:199.5px"></div><span class="t" style="left:589.7px;top:630.9px;font-size:14.8px;color:#151515;transform:scaleX(0.987);">DI (δ - δ) Ones:</span><span class="t" style="left:730.4px;top:632.0px;font-size:13.6px;color:#2020a4;transform:scaleX(0.887);">183.2 mV</span>
<div class="abs row" style="left:787.9px;top:549.5px;width:199.5px"></div><span class="t" style="left:791.8px;top:552.9px;font-size:14.8px;color:#151515;transform:scaleX(0.943);">Signal Amplitude:</span><span class="t" style="left:947.4px;top:554.0px;font-size:13.6px;color:#2020a4;transform:scaleX(0.890);">1.19 V</span><div class="abs row" style="left:787.9px;top:575.5px;width:199.5px"></div><span class="t" style="left:791.8px;top:578.9px;font-size:14.8px;color:#151515;transform:scaleX(0.950);">TI (1.0E-12) Zeros:</span><span class="t" style="left:930.9px;top:580.0px;font-size:13.6px;color:#2020a4;transform:scaleX(0.885);">210.9 mV</span><div class="abs row" style="left:787.9px;top:601.5px;width:199.5px"></div><span class="t" style="left:791.8px;top:604.9px;font-size:14.8px;color:#151515;transform:scaleX(0.941);">RN (rms) Zeros:</span><span class="t" style="left:931.9px;top:606.0px;font-size:13.6px;color:#2020a4;transform:scaleX(0.868);">1.278 mV</span><div class="abs row" style="left:787.9px;top:627.5px;width:199.5px"></div><span class="t" style="left:791.8px;top:630.9px;font-size:14.8px;color:#151515;transform:scaleX(0.978);">DI (δ - δ) Zeros:</span><span class="t" style="left:931.4px;top:632.0px;font-size:13.6px;color:#2020a4;transform:scaleX(0.876);">193.4 mV</span>
<div class="abs" style="left:583.5px;top:653.5px;width:406px;height:7.5px;overflow:hidden"><div class="abs row" style="left:2.3px;top:0;width:199.5px"></div><div class="abs row" style="left:203.8px;top:0;width:199.5px"></div><div class="abs dot" style="left:32px"></div><div class="abs dot" style="left:56px"></div><div class="abs dot" style="left:233.5px"></div><div class="abs dot" style="left:257.5px"></div></div><div class="abs" style="left:993.4px;top:548px;width:23.2px;height:110.5px;background:#dedede;border:1px solid #cacaca;border-radius:3px"><div class="abs" style="left:1.2px;top:23px;width:19px;height:30.5px;background:#9a9a9a;border-radius:4px"></div></div><svg class="abs" style="left:993.4px;top:548px" width="23" height="111" viewBox="0 0 23 111"><path d="M4.4 16.8 L11.8 9 L19.2 16.8 Z M4.4 95.6 L11.8 103.6 L19.2 95.6 Z" fill="#8e8e8e"/></svg><div class="abs btn" style="left:585px;top:663.3px;width:28px"></div><svg class="abs" style="left:591.5px;top:668px" width="16" height="17" viewBox="0 0 16 17"><path d="M5 2.4 C6.5 6 8.5 10.5 10.8 14.4" fill="none" stroke="#f00808" stroke-width="3" stroke-linecap="round"/><path d="M13.4 2.6 C10 6 6 10.5 2.6 14.6" fill="none" stroke="#f00808" stroke-width="3.6" stroke-linecap="round"/></svg><div class="abs btn" style="left:618px;top:663.3px;width:60.5px"></div><span class="t" style="left:620.9px;top:669.3px;font-size:14px;color:#151515;">Details...</span><div class="abs btn" style="left:683px;top:663.3px;width:55px"></div><span class="t" style="left:685.9px;top:669.3px;font-size:14px;color:#151515;">Limits...</span><div class="abs btn" style="left:970.8px;top:663.5px;width:40.2px"><div class="abs grn" style="left:2px;top:4px;width:35px;height:17px"></div></div>

<div class="abs" style="left:0;top:695.5px;width:1024px;height:73px;background:linear-gradient(#5a5a5a 0,#2a2a2a 3px,#0c0c0c 6px,#000 9px,#000 36px,#161616 54px,#3c3c3c 73px)"></div><div class="abs sbtn" style="left:6px;top:700.5px;width:25.5px;height:30px;border-radius:7px 0 0 0/30px 0 0 0"></div><div class="abs sbtn" style="left:6px;top:733px;width:25.5px;height:30.5px;border-radius:0 0 0 7px/0 0 0 30px"></div><svg class="abs" style="left:6px;top:700px" width="26" height="64" viewBox="0 0 26 64"><path d="M18.5 9.5 L8.5 15.5 L18.5 21.5 Z" fill="none" stroke="#4e4e4e" stroke-width="1.2"/><path d="M4 42h4v2.5h-4zM10.5 42h4v2.5h-4zM17 42h4v2.5h-4zM4 47.5h4v2.5h-4zM10.5 47.5h4v2.5h-4z" fill="#4a4a4a"/></svg><div class="abs sb" style="left:34px;top:700px;width:439.5px;height:63.5px"></div><div class="abs" style="left:254.5px;top:701px;width:1px;height:61.5px;background:#5c5c5c"></div><div class="abs" style="left:363.5px;top:701px;width:1px;height:61.5px;background:#5c5c5c"></div><div class="abs" style="left:92px;top:733.6px;width:24.4px;height:24.4px;border-radius:50%;background:radial-gradient(circle at 50% 25%,#74a2fc,#4a7af0 70%,#3c6ae4);box-shadow:0 0 0 1.2px #0c1a58"></div><span class="t" style="left:95.9px;top:740.5px;font-size:10px;color:#0c1a50;transform:scaleX(0.900);">D1A</span><span class="t" style="left:121.2px;top:731.6px;font-size:12.3px;color:#fff;transform:scaleX(0.915);">280 mV/</span><span class="t" style="left:121.9px;top:746.9px;font-size:12.3px;color:#fff;transform:scaleX(0.887);">-2.9 mV</span><span class="t" style="left:263.2px;top:710.6px;font-size:12px;color:#dcdcdc;font-weight:bold;font-style:italic;transform:scaleX(0.956);">CDR...</span><svg class="abs" style="left:341px;top:708.5px" width="14" height="17" viewBox="0 0 14 17"><path d="M3.3 8 V5 a3.7 3.7 0 0 1 7.4 0 V8" fill="none" stroke="#2fae32" stroke-width="1.8"/><rect x="1" y="7.3" width="12" height="8.5" rx="1" fill="#2fae32"/></svg><span class="t" style="left:262.4px;top:727.9px;font-size:12.3px;color:#fff;transform:scaleX(0.894);">20.000000 Gb/s</span><span class="t" style="left:262.4px;top:743.1px;font-size:12.3px;color:#a8a8a8;transform:scaleX(0.861);">LBW:</span><span class="t" style="left:292.4px;top:743.1px;font-size:12.3px;color:#fff;transform:scaleX(0.873);">1.500 MHz</span><span class="t" style="left:371.9px;top:710.6px;font-size:12px;color:#dcdcdc;font-weight:bold;font-style:italic;transform:scaleX(0.938);">PTB...</span><div class="abs" style="left:448px;top:710.3px;width:15px;height:15px;border-radius:50%;background:#4c4c4c;border:1px solid #1c1c1c"></div><span class="t" style="left:371.4px;top:729.7px;font-size:12.3px;color:#b4b4b4;transform:scaleX(0.871);">Reference:</span><span class="t" style="left:371.4px;top:744.7px;font-size:12.3px;color:#fff;transform:scaleX(0.894);">Internal Reference</span><svg class="abs" style="left:448px;top:738px" width="25" height="25" viewBox="0 0 25 25"><path d="M24.5 3 V20 a4.5 4.5 0 0 1 -4.5 4.5 H3 Z" fill="#585858"/></svg><span class="t" style="left:464.4px;top:749.7px;font-size:9.5px;color:#000;font-weight:bold;transform:scaleX(0.944);">1</span><div class="abs sbtn" style="left:476.2px;top:700.5px;width:25.5px;height:30px;border-radius:0 7px 0 0/0 30px 0 0"></div><div class="abs sbtn" style="left:476.2px;top:733px;width:25.5px;height:30.5px;border-radius:0 0 7px 0/0 0 30px 0"></div><svg class="abs" style="left:476.5px;top:700px" width="26" height="64" viewBox="0 0 26 64"><path d="M7.5 9.5 L17.5 15.5 L7.5 21.5 Z" fill="none" stroke="#4e4e4e" stroke-width="1.2"/><g fill="#6a6a6a"><rect x="10.2" y="38.7" width="4.2" height="5" rx=".8" transform="rotate(0 12.3 48.3)"/><rect x="10.2" y="38.7" width="4.2" height="5" rx=".8" transform="rotate(45 12.3 48.3)"/><rect x="10.2" y="38.7" width="4.2" height="5" rx=".8" transform="rotate(90 12.3 48.3)"/><rect x="10.2" y="38.7" width="4.2" height="5" rx=".8" transform="rotate(135 12.3 48.3)"/><rect x="10.2" y="38.7" width="4.2" height="5" rx=".8" transform="rotate(180 12.3 48.3)"/><rect x="10.2" y="38.7" width="4.2" height="5" rx=".8" transform="rotate(225 12.3 48.3)"/><rect x="10.2" y="38.7" width="4.2" height="5" rx=".8" transform="rotate(270 12.3 48.3)"/><rect x="10.2" y="38.7" width="4.2" height="5" rx=".8" transform="rotate(315 12.3 48.3)"/></g><circle cx="12.3" cy="48.3" r="5.2" fill="none" stroke="#6a6a6a" stroke-width="3.6"/></svg>
<div class="abs sb" style="left:533.8px;top:700px;width:98px;height:63.5px"></div><span class="t" style="left:557.4px;top:704.1px;font-size:12px;color:#dadada;font-weight:bold;font-style:italic;transform:scaleX(0.965);">Timebase</span><span class="t" style="left:561.9px;top:719.7px;font-size:12.3px;color:#707070;transform:scaleX(0.930);">8.33 ps/</span><span class="t" style="left:540.2px;top:734.7px;font-size:12.3px;color:#a8a8a8;transform:scaleX(0.861);">Pos:</span><span class="t" style="left:565.2px;top:734.7px;font-size:12.3px;color:#707070;transform:scaleX(0.892);">24.01000 ns</span><div class="abs sb" style="left:635px;top:700px;width:114.5px;height:63.5px"></div><span class="t" style="left:661.4px;top:704.1px;font-size:12px;color:#dadada;font-weight:bold;font-style:italic;transform:scaleX(0.955);">Acquisition</span><span class="t" style="left:664.4px;top:719.7px;font-size:12.3px;color:#fff;transform:scaleX(0.911);">Jitter Mode</span><span class="t" style="left:664.4px;top:733.5px;font-size:12.3px;color:#fff;transform:scaleX(0.891);">Acquisition</span><div class="abs sb" style="left:752px;top:700px;width:100px;height:63.5px"></div><span class="t" style="left:783.2px;top:704.1px;font-size:12px;color:#dadada;font-weight:bold;font-style:italic;transform:scaleX(0.982);">Trigger</span><span class="t" style="left:763.0px;top:718.2px;font-size:12.3px;color:#d0d0d0;transform:scaleX(0.919);">Src:</span><span class="t" style="left:784.9px;top:718.2px;font-size:12.3px;color:#fff;transform:scaleX(0.884);">Front Panel</span><span class="t" style="left:762.8px;top:733.4px;font-size:12.3px;color:#707070;transform:scaleX(0.900);">20.000000 Gb/s</span><span class="t" style="left:782.4px;top:747.1px;font-size:12.3px;color:#fff;transform:scaleX(0.917);">127 bits</span><div class="abs sb" style="left:854.5px;top:700px;width:55.5px;height:63.5px;border-color:#505050;background:linear-gradient(#242424 0,#202020 48%,#161616 50%,#181818)"></div><span class="t" style="left:863.8px;top:704.6px;font-size:12.3px;color:#6c6c6c;transform:scaleX(0.915);">Pattern</span><span class="t" style="left:870.9px;top:745.7px;font-size:12.3px;color:#6c6c6c;transform:scaleX(0.874);">Lock</span><svg class="abs" style="left:872px;top:721px" width="21" height="24" viewBox="0 0 21 24"><path d="M5.5 11 V7 a5 5 0 0 1 10 0 V11" fill="none" stroke="#7a7a7a" stroke-width="2"/><rect x="1.3" y="10" width="18.4" height="12.5" rx="1.5" fill="#367e42"/><path d="M1.3 13.6 H19.7 M1.3 17.8 H19.7" stroke="#1f4a26" stroke-width="1.6"/></svg>
<div class="abs" style="left:912.8px;top:705.9px;width:52px;height:52px;border-radius:50%;border:1.2px solid #8e8e8e;background:linear-gradient(#343434 0,#2a2a2a 49%,#101010 51%,#181818)"></div><div class="abs" style="left:968px;top:705.9px;width:52px;height:52px;border-radius:50%;border:1.2px solid #a4a4a4;background:linear-gradient(#2a5a2e 0,#1f4a24 49%,#103214 51%,#143a18)"></div><svg class="abs" style="left:912px;top:705px" width="110" height="54" viewBox="0 0 110 54"><path d="M18 12.6 L27.1 4.5 L36.3 12.6 Z" fill="#c4c4c4"/><path d="M73.2 41 L82 50.3 L90.7 41 Z" fill="#c4c4c4"/></svg><span class="t" style="left:925.3px;top:724.3px;font-size:12.6px;color:#fff;font-weight:bold;font-style:italic;">Math</span><span class="t" style="left:974.6px;top:724.3px;font-size:12.6px;color:#fff;font-weight:bold;font-style:italic;transform:scaleX(0.911);">Signals</span>

<div class="abs" style="left:1021.2px;top:76px;width:1.8px;height:418px;background:#3a3a3a"></div><div class="abs" style="left:1023px;top:75.5px;width:1px;height:419px;background:#b0b0b0"></div><svg class="abs" style="left:992px;top:90px" width="20" height="12" viewBox="0 0 20 12"><path d="M1 3 H18 M1 8.5 H18" stroke="#7a7a7a" stroke-width="2.4"/></svg><svg class="abs" style="left:970px;top:288px" width="48" height="26" viewBox="0 0 48 26"><path d="M1.5 12.5 L16 5 V20 Z" fill="#2a50b0"/><rect x="17" y="4" width="28" height="19" rx="4" fill="#1c1c1c"/></svg><div class="abs" style="left:972px;top:44.5px;width:50.3px;height:649px;border-radius:9px 0 0 9px;background:rgba(74,74,74,.77);border-left:1px solid rgba(190,190,190,.45)"></div><svg class="abs" style="left:982px;top:664px" width="26" height="26" viewBox="0 0 26 26"><circle cx="13" cy="13" r="11.4" fill="none" stroke="rgba(215,215,215,.8)" stroke-width="1.2"/><path d="M17.7 7.6 L6.4 13 L17.7 18.3 Z" fill="rgba(215,215,215,.85)"/></svg><div class="abs rb" style="top:54.8px"></div><span class="t" style="left:990.4px;top:66.5px;font-size:12.6px;color:#161616;transform:scaleX(0.987);">1A</span><div class="abs rb" style="top:102.8px"></div><span class="t" style="left:990.1px;top:114.5px;font-size:12.6px;color:#161616;transform:scaleX(1.019);">2A</span><div class="abs rb blu" style="top:150.8px"></div><span class="t" style="left:985.6px;top:162.5px;font-size:12.6px;color:#141428;">D1A</span><div class="abs rb" style="top:198.8px"></div><span class="t" style="left:991.1px;top:210.5px;font-size:12.6px;color:#161616;transform:scaleX(0.932);">F1</span><div class="abs rb" style="top:246.8px"></div><span class="t" style="left:990.8px;top:258.5px;font-size:12.6px;color:#161616;transform:scaleX(0.979);">F2</span><div class="abs rb" style="top:294.8px"></div><span class="t" style="left:990.8px;top:306.5px;font-size:12.6px;color:#161616;transform:scaleX(0.979);">F3</span>

<svg class="abs" style="left:0;top:0" width="124" height="64" viewBox="0 0 124 64">
<defs><radialGradient id="ovg" cx="50%" cy="88%" r="62%"><stop offset="0" stop-color="#f35cf0"/><stop offset=".35" stop-color="#b010b0"/><stop offset=".75" stop-color="#5a0560"/><stop offset="1" stop-color="#48044e"/></radialGradient>
<linearGradient id="ovs" x1="0" y1="0" x2="0" y2="1"><stop offset="0" stop-color="#fff" stop-opacity=".75"/><stop offset="1" stop-color="#fff" stop-opacity=".35"/></linearGradient>
<clipPath id="ovc"><ellipse cx="60.5" cy="28" rx="53" ry="30.5"/></clipPath></defs>
<ellipse cx="60.5" cy="28" rx="54.5" ry="32" fill="#120014"/>
<ellipse cx="60.5" cy="28" rx="53" ry="30.5" fill="url(#ovg)"/>
<path clip-path="url(#ovc)" d="M0 -5 H124 V14 C100 15 80 14 64 17 C48 20.5 30 22 6 21 Z" fill="url(#ovs)"/>
<path d="M51 42.5 H69.5 L60.5 52 Z" fill="#c455c8"/>
</svg>
<span class="t" style="left:18.4px;top:17.9px;font-size:14.5px;color:#fde8fd;font-weight:bold;transform:scaleX(1.091);text-shadow:1px 1px 1px #2a002c;-webkit-text-stroke:.5px #fde8fd;">Jitter/Noise</span>
</div>
</body>
</html>
